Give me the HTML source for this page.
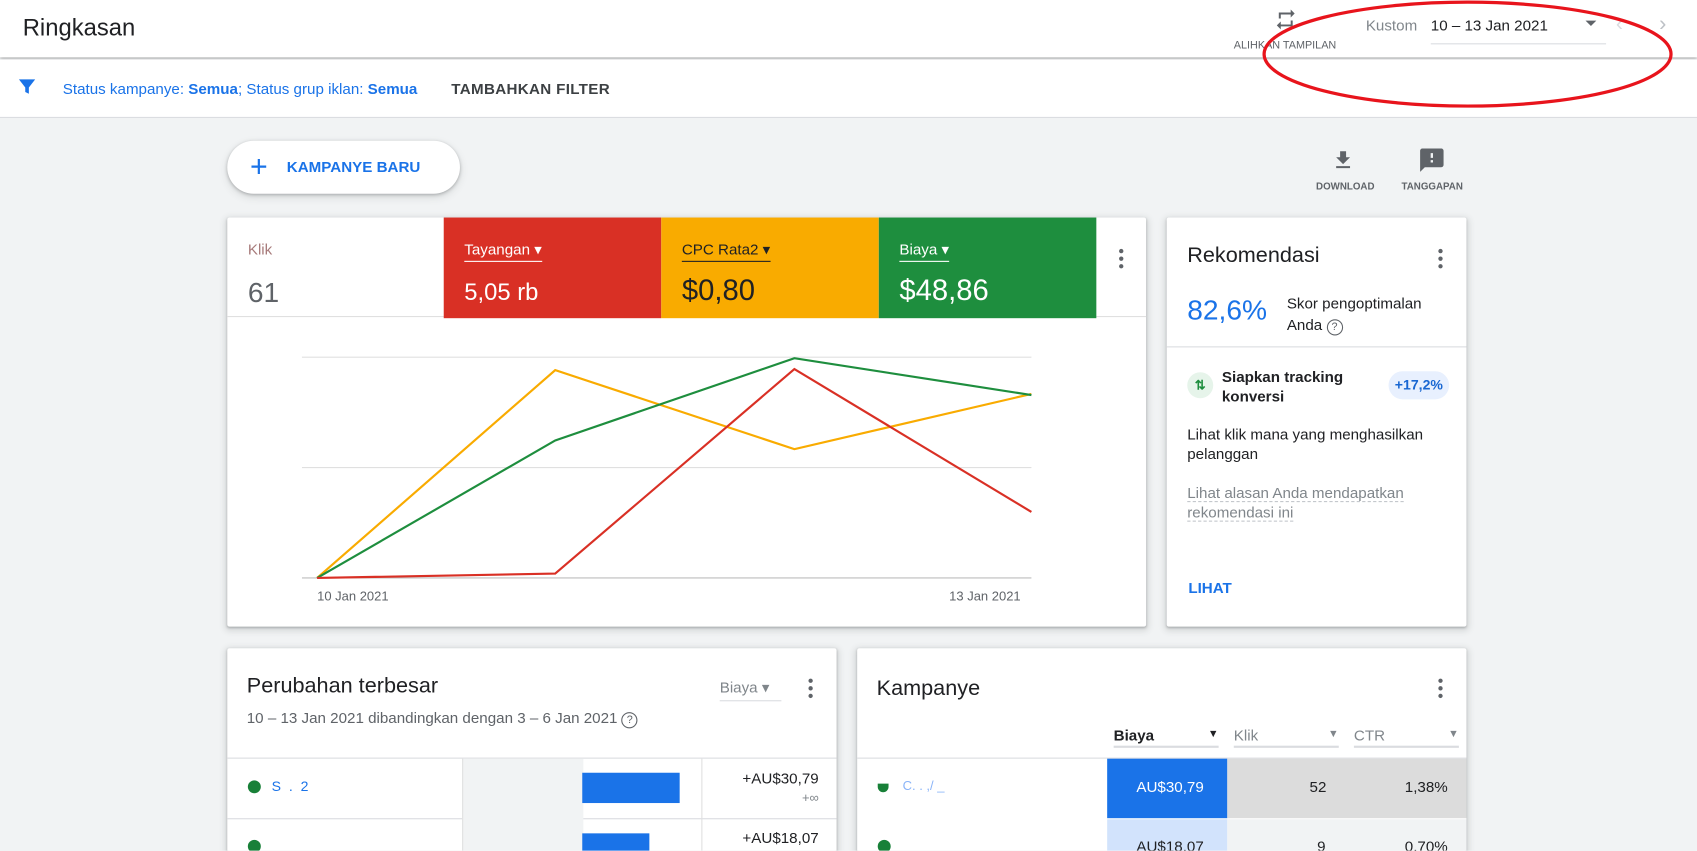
<!DOCTYPE html>
<html><head><meta charset="utf-8"><style>
html,body{margin:0;padding:0;width:1697px;height:851px;overflow:hidden;background:#f1f3f4;font-family:"Liberation Sans",Arial,sans-serif}
#w{position:absolute;left:0;top:0;width:1568px;height:786px;transform:scale(1.08227);transform-origin:0 0;background:#f1f3f4;overflow:hidden}
.a{position:absolute;white-space:nowrap}
.card{position:absolute;background:#fff;box-shadow:0 1px 2px rgba(60,64,67,.3),0 2px 6px 2px rgba(60,64,67,.15);border-radius:2px}
.keb{position:absolute;width:4px}
.keb i{display:block;width:4px;height:4px;border-radius:2px;background:#5f6368;margin-bottom:3px}
.th span{float:right;font-size:10px;line-height:16px}
</style></head><body><div id="w">
<!-- header -->
<div class="a" style="left:0;top:0;width:1568px;height:53px;background:#fff;box-shadow:0 1px 3px rgba(0,0,0,.35)"></div>
<div class="a" style="left:21px;top:13px;font-size:22px;color:#202124">Ringkasan</div>
<svg class="a" style="left:1177px;top:7px" width="22" height="22" viewBox="0 0 24 24"><path d="M7 7h10v3l4-4-4-4v3H5v6h2V7zm10 10H7v-3l-4 4 4 4v-3h12v-6h-2v4z" fill="#5f6368"/></svg>
<div class="a" style="left:1140px;top:37px;font-size:10px;color:#5f6368">ALIHKAN TAMPILAN</div>
<div class="a" style="left:1262px;top:15px;font-size:14px;color:#80868b">Kustom</div>
<div class="a" style="left:1322px;top:15px;font-size:14px;color:#202124">10 – 13 Jan 2021</div>
<div class="a" style="left:1465px;top:19px;width:0;height:0;border-left:5px solid transparent;border-right:5px solid transparent;border-top:5px solid #5f6368"></div>
<div class="a" style="left:1322px;top:40px;width:162px;height:1px;background:#dadce0"></div>
<div class="a" style="left:1493px;top:11px;font-size:20px;color:#dadce0">‹</div>
<div class="a" style="left:1533px;top:11px;font-size:20px;color:#bdc1c6">›</div>
<!-- filter bar -->
<div class="a" style="left:0;top:55px;width:1568px;height:53px;background:#fff;border-bottom:1px solid #dadce0"></div>
<svg class="a" style="left:15px;top:70px" width="20" height="20" viewBox="0 0 24 24"><path d="M3 4h18l-7 9v7l-4-2v-5z" fill="#1a73e8"/></svg>
<div class="a" style="left:58px;top:74px;font-size:14px;color:#1a73e8">Status kampanye: <b>Semua</b>; Status grup iklan: <b>Semua</b></div>
<div class="a" style="left:417px;top:74px;font-size:14px;color:#3c4043;font-weight:bold;letter-spacing:.3px">TAMBAHKAN FILTER</div>
<svg class="a" style="left:1167px;top:1px;overflow:visible" width="380" height="100"><ellipse cx="189" cy="49" rx="188" ry="48" fill="none" stroke="#e8141c" stroke-width="3"/></svg>
<!-- new campaign -->
<div class="a" style="left:210px;top:130px;width:215px;height:49px;background:#fff;border-radius:25px;box-shadow:0 1px 3px rgba(60,64,67,.35),0 3px 8px rgba(60,64,67,.15)"></div>
<div class="a" style="left:231px;top:139px;font-size:28px;color:#1a73e8;line-height:30px">+</div>
<div class="a" style="left:265px;top:146px;font-size:14px;color:#1a73e8;font-weight:bold">KAMPANYE BARU</div>
<svg class="a" style="left:1230px;top:137px" width="22" height="22" viewBox="0 0 24 24"><path d="M19 9h-4V3H9v6H5l7 7 7-7zM5 18v2h14v-2H5z" fill="#5f6368"/></svg>
<div class="a" style="left:1216px;top:167px;font-size:9px;color:#5f6368;font-weight:bold">DOWNLOAD</div>
<svg class="a" style="left:1310px;top:135px" width="26" height="26" viewBox="0 0 24 24"><path d="M20 2H4c-1.1 0-2 .9-2 2v18l4-4h14c1.1 0 2-.9 2-2V4c0-1.1-.9-2-2-2zm-7 12h-2v-2h2v2zm0-4h-2V6h2v4z" fill="#5f6368"/></svg>
<div class="a" style="left:1295px;top:167px;font-size:9px;color:#5f6368;font-weight:bold">TANGGAPAN</div>
<!-- main chart card -->
<div class="card" style="left:210px;top:201px;width:849px;height:378px"></div>
<div class="a" style="left:210px;top:292px;width:849px;height:1px;background:#e0e0e0"></div>
<div class="a" style="left:229px;top:222px;font-size:14px;color:#a77a7a">Klik</div>
<div class="a" style="left:229px;top:255px;font-size:26px;color:#5f6368">61</div>
<div class="a" style="left:410px;top:201px;width:201px;height:93px;background:#d93025"></div>
<div class="a" style="left:611px;top:201px;width:201px;height:93px;background:#f9ab00"></div>
<div class="a" style="left:812px;top:201px;width:201px;height:93px;background:#1e8e3e"></div>
<div class="a" style="left:429px;top:222px;font-size:14px;color:#fff;border-bottom:1px solid #fff;padding-bottom:2px">Tayangan ▾</div>
<div class="a" style="left:429px;top:257px;font-size:22px;color:#fff">5,05 rb</div>
<div class="a" style="left:630px;top:222px;font-size:14px;color:#202124;border-bottom:1px solid #202124;padding-bottom:2px">CPC Rata2 ▾</div>
<div class="a" style="left:630px;top:253px;font-size:27px;color:#202124">$0,80</div>
<div class="a" style="left:831px;top:222px;font-size:14px;color:#fff;border-bottom:1px solid #fff;padding-bottom:2px">Biaya ▾</div>
<div class="a" style="left:831px;top:253px;font-size:27px;color:#fff">$48,86</div>
<div class="keb" style="left:1034px;top:230px"><i></i><i></i><i></i></div>
<svg class="a" style="left:0;top:0" width="1060" height="580">
<line x1="279" y1="330" x2="953" y2="330" stroke="#e0e0e0"/>
<line x1="279" y1="432" x2="953" y2="432" stroke="#e0e0e0"/>
<line x1="279" y1="534" x2="953" y2="534" stroke="#bdbdbd"/>
<polyline points="293,534 513,342 734,415 953,364" fill="none" stroke="#f9ab00" stroke-width="2"/>
<polyline points="293,534 513,407 734,331 953,365" fill="none" stroke="#1e8e3e" stroke-width="2"/>
<polyline points="293,534 513,530 734,341 953,473" fill="none" stroke="#d93025" stroke-width="2"/>
</svg>
<div class="a" style="left:293px;top:544px;font-size:12px;color:#5f6368">10 Jan 2021</div>
<div class="a" style="left:877px;top:544px;font-size:12px;color:#5f6368">13 Jan 2021</div>
<!-- rekomendasi -->
<div class="card" style="left:1078px;top:201px;width:277px;height:378px"></div>
<div class="a" style="left:1097px;top:225px;font-size:20px;color:#202124">Rekomendasi</div>
<div class="keb" style="left:1329px;top:230px"><i></i><i></i><i></i></div>
<div class="a" style="left:1097px;top:271px;font-size:26px;color:#1a73e8">82,6%</div>
<div class="a" style="left:1189px;top:270px;font-size:14px;color:#202124;line-height:20px">Skor pengoptimalan<br>Anda <span style="display:inline-block;width:13px;height:13px;border:1px solid #5f6368;border-radius:50%;font-size:10px;line-height:13px;text-align:center;color:#5f6368">?</span></div>
<div class="a" style="left:1078px;top:320px;width:277px;height:1px;background:#dadce0"></div>
<div class="a" style="left:1097px;top:344px;width:24px;height:24px;border-radius:50%;background:#e6f4ea;color:#1e8e3e;font-size:12px;text-align:center;line-height:24px;font-weight:bold">⇅</div>
<div class="a" style="left:1129px;top:339px;font-size:14px;color:#202124;font-weight:bold;line-height:18px">Siapkan tracking<br>konversi</div>
<div class="a" style="left:1283px;top:343px;width:56px;height:26px;border-radius:13px;background:#e8f0fe;color:#1967d2;font-size:13px;font-weight:bold;text-align:center;line-height:26px">+17,2%</div>
<div class="a" style="left:1097px;top:392px;font-size:14px;color:#202124;line-height:18px">Lihat klik mana yang menghasilkan<br>pelanggan</div>
<div class="a" style="left:1097px;top:446px;font-size:14px;color:#80868b;line-height:18px"><span style="border-bottom:1px dashed #bdc1c6">Lihat alasan Anda mendapatkan</span><br><span style="border-bottom:1px dashed #bdc1c6">rekomendasi ini</span></div>
<div class="a" style="left:1098px;top:535px;font-size:14px;color:#1a73e8;font-weight:bold">LIHAT</div>
<!-- perubahan -->
<div class="card" style="left:210px;top:599px;width:563px;height:220px"></div>
<div class="a" style="left:228px;top:623px;font-size:20px;color:#202124">Perubahan terbesar</div>
<div class="a" style="left:228px;top:655px;font-size:14px;color:#5f6368">10 – 13 Jan 2021 dibandingkan dengan 3 – 6 Jan 2021 <span style="display:inline-block;width:13px;height:13px;border:1px solid #5f6368;border-radius:50%;font-size:10px;line-height:13px;text-align:center">?</span></div>
<div class="a" style="left:665px;top:627px;font-size:14px;color:#80868b;border-bottom:1px solid #dadce0;padding-bottom:3px;width:57px">Biaya ▾</div>
<div class="keb" style="left:747px;top:627px"><i></i><i></i><i></i></div>
<div class="a" style="left:210px;top:700px;width:563px;height:1px;background:#dadce0"></div>
<div class="a" style="left:210px;top:756px;width:563px;height:1px;background:#dadce0"></div>
<div class="a" style="left:427px;top:701px;width:111px;height:90px;background:#f1f3f4;border-left:1px solid #e0e0e0"></div>
<div class="a" style="left:648px;top:701px;width:1px;height:90px;background:#e0e0e0"></div>
<div class="a" style="left:538px;top:714px;width:90px;height:28px;background:#1a73e8"></div>
<div class="a" style="left:538px;top:770px;width:62px;height:20px;background:#1a73e8"></div>
<div class="a" style="left:229px;top:721px;width:12px;height:12px;border-radius:50%;background:#188038"></div>
<div class="a" style="left:251px;top:719px;font-size:13px;color:#1a73e8">S&nbsp;&nbsp;.&nbsp;&nbsp;2</div>
<div class="a" style="left:229px;top:776px;width:12px;height:12px;border-radius:50%;background:#188038"></div>
<div class="a" style="left:686px;top:711px;font-size:14px;color:#202124">+AU$30,79</div>
<div class="a" style="left:741px;top:730px;font-size:12px;color:#80868b">+∞</div>
<div class="a" style="left:686px;top:766px;font-size:14px;color:#202124">+AU$18,07</div>
<!-- kampanye -->
<div class="card" style="left:792px;top:599px;width:563px;height:220px"></div>
<div class="a" style="left:810px;top:625px;font-size:20px;color:#202124">Kampanye</div>
<div class="keb" style="left:1329px;top:627px"><i></i><i></i><i></i></div>
<div class="a th" style="left:1029px;top:671px;width:97px;font-size:14px;color:#202124;font-weight:bold;border-bottom:2px solid #dadce0;padding-bottom:2px">Biaya<span>▼</span></div>
<div class="a th" style="left:1140px;top:671px;width:97px;font-size:14px;color:#80868b;border-bottom:2px solid #dadce0;padding-bottom:2px">Klik<span>▼</span></div>
<div class="a th" style="left:1251px;top:671px;width:97px;font-size:14px;color:#80868b;border-bottom:2px solid #dadce0;padding-bottom:2px">CTR<span>▼</span></div>
<div class="a" style="left:792px;top:700px;width:563px;height:1px;background:#dadce0"></div>
<div class="a" style="left:1023px;top:701px;width:111px;height:55px;background:#1a73e8"></div>
<div class="a" style="left:1134px;top:701px;width:221px;height:55px;background:#dcdcdc"></div>
<div class="a" style="left:1023px;top:757px;width:111px;height:40px;background:#d2e3fc"></div>
<div class="a" style="left:1134px;top:757px;width:221px;height:40px;background:#f1f3f4"></div>
<div class="a" style="left:1050px;top:719px;font-size:14px;color:#fff">AU$30,79</div>
<div class="a" style="left:1210px;top:719px;font-size:14px;color:#202124">52</div>
<div class="a" style="left:1298px;top:719px;font-size:14px;color:#202124">1,38%</div>
<div class="a" style="left:1050px;top:774px;font-size:14px;color:#202124">AU$18,07</div>
<div class="a" style="left:1217px;top:774px;font-size:14px;color:#202124">9</div>
<div class="a" style="left:1298px;top:774px;font-size:14px;color:#202124">0,70%</div>
<div class="a" style="left:811px;top:724px;width:10px;height:8px;background:#188038;border-radius:0 0 5px 5px"></div>
<div class="a" style="left:834px;top:719px;font-size:12px;color:#8ab4f8">C. .  ,/ _</div>
<div class="a" style="left:811px;top:776px;width:12px;height:12px;border-radius:50%;background:#188038"></div>
</div></body></html>
